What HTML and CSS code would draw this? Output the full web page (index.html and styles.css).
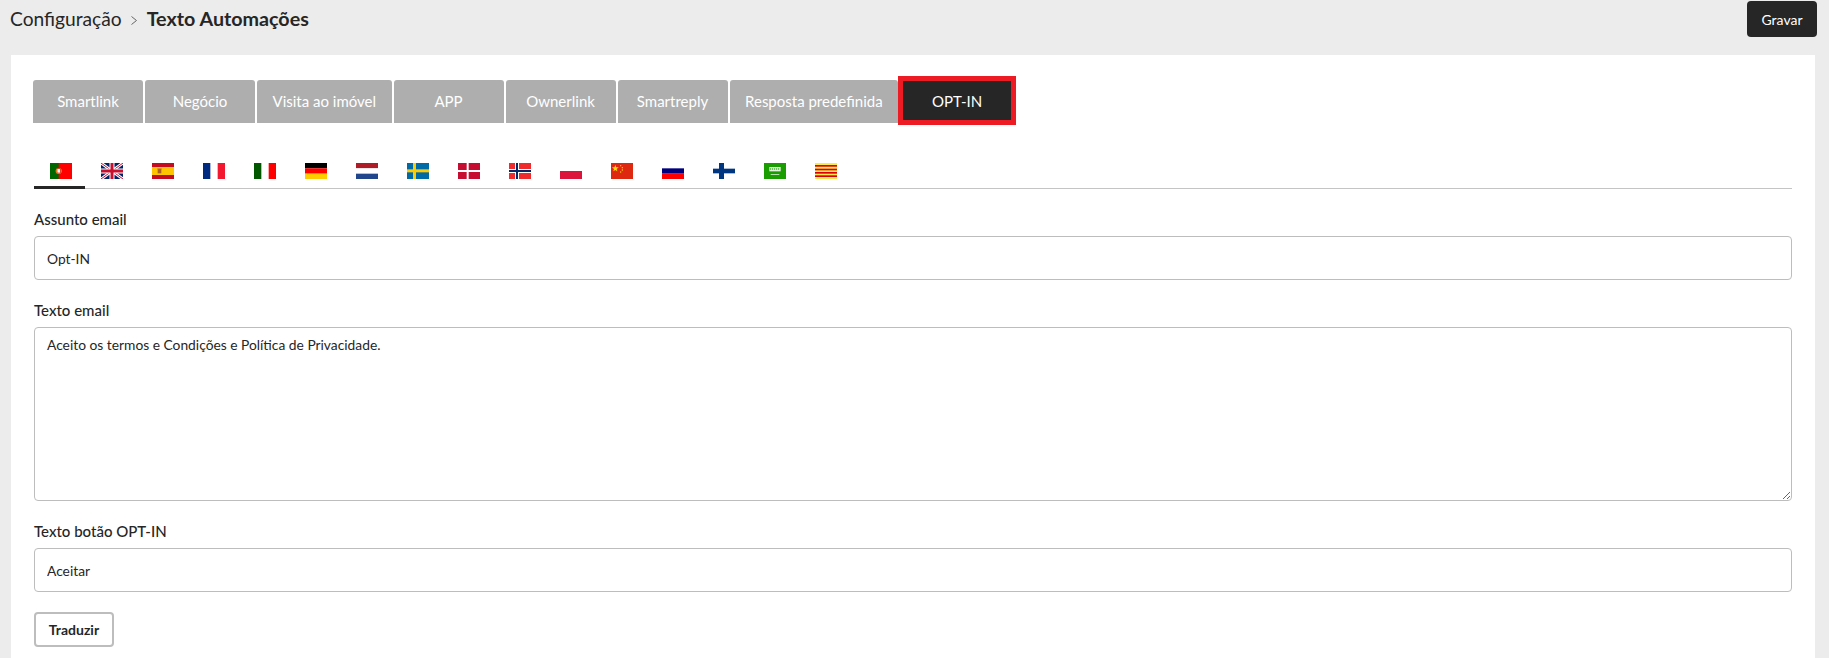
FILE: index.html
```html
<!DOCTYPE html>
<html lang="pt">
<head>
<meta charset="utf-8">
<title>Texto Automações</title>
<link rel="stylesheet" href="styles.css">
</head>
<body>
<header class="topbar">
  <div class="crumbs"><span class="crumb">Configuração</span><svg class="chev" viewBox="0 0 6 9" width="6" height="9"><path d="M.5 .5 5.500 4.500 .5 8.500" fill="none" stroke="#666" stroke-width="1"/></svg><strong class="crumb-current">Texto Automações</strong></div>
  <button class="save" type="button">Gravar</button>
</header>
<main class="card">
  <nav class="tabs">
    <a class="tab">Smartlink</a>
    <a class="tab">Negócio</a>
    <a class="tab">Visita ao imóvel</a>
    <a class="tab">APP</a>
    <a class="tab">Ownerlink</a>
    <a class="tab">Smartreply</a>
    <a class="tab">Resposta predefinida</a>
    <a class="tab tab-active">OPT-IN<span class="highlight"></span></a>
  </nav>
  <div class="langs">
    <a class="lang lang-active"><svg class="flag" viewBox="0 0 66 48"><rect width="66" height="48" fill="#f00"/><rect width="26" height="48" fill="#060"/><circle cx="26" cy="24" r="9" fill="#e8b830"/><rect x="21" y="17" width="10" height="13" fill="#fff" stroke="#d00" stroke-width="2"/></svg></a>
    <a class="lang"><svg class="flag" viewBox="0 0 66 48"><rect width="66" height="48" fill="#012169"/><path d="M0 0 66 48M66 0 0 48" stroke="#fff" stroke-width="9"/><path d="M0 0 66 48M66 0 0 48" stroke="#c8102e" stroke-width="3"/><path d="M33 0V48M0 24H66" stroke="#fff" stroke-width="15"/><path d="M33 0V48M0 24H66" stroke="#c8102e" stroke-width="9"/></svg></a>
    <a class="lang"><svg class="flag" viewBox="0 0 66 48"><rect width="66" height="48" fill="#c60b1e"/><rect y="12" width="66" height="24" fill="#ffc400"/><rect x="17" y="18" width="11" height="13" fill="#ad5f22"/><rect x="16" y="16" width="13" height="3" fill="#c8762c"/></svg></a>
    <a class="lang"><svg class="flag" viewBox="0 0 66 48"><rect width="66" height="48" fill="#fff"/><rect width="22" height="48" fill="#002a7f"/><rect x="44" width="22" height="48" fill="#f31830"/></svg></a>
    <a class="lang"><svg class="flag" viewBox="0 0 66 48"><rect width="66" height="48" fill="#fff"/><rect width="22" height="48" fill="#005700"/><rect x="44" width="22" height="48" fill="#f00"/></svg></a>
    <a class="lang"><svg class="flag" viewBox="0 0 66 48"><rect width="66" height="16" fill="#000"/><rect y="16" width="66" height="16" fill="#f00"/><rect y="32" width="66" height="16" fill="#ffcc00"/></svg></a>
    <a class="lang"><svg class="flag" viewBox="0 0 66 48"><rect width="66" height="16" fill="#ae1c28"/><rect y="16" width="66" height="16" fill="#fff"/><rect y="32" width="66" height="16" fill="#21468b"/></svg></a>
    <a class="lang"><svg class="flag" viewBox="0 0 66 48"><rect width="66" height="48" fill="#006aa7"/><rect x="18" width="9" height="48" fill="#fecc00"/><rect y="19" width="66" height="9" fill="#fecc00"/></svg></a>
    <a class="lang"><svg class="flag" viewBox="0 0 66 48"><rect width="66" height="48" fill="#c60c30"/><rect x="26" width="6" height="48" fill="#fff"/><rect y="21" width="66" height="6" fill="#fff"/></svg></a>
    <a class="lang"><svg class="flag" viewBox="0 0 66 48"><rect width="66" height="48" fill="#ef2b2d"/><rect x="18" width="12" height="48" fill="#fff"/><rect y="18" width="66" height="12" fill="#fff"/><rect x="21" width="6" height="48" fill="#002868"/><rect y="21" width="66" height="6" fill="#002868"/></svg></a>
    <a class="lang"><svg class="flag" viewBox="0 0 66 48"><rect width="66" height="24" fill="#fff"/><rect y="24" width="66" height="24" fill="#dc143c"/></svg></a>
    <a class="lang"><svg class="flag" viewBox="0 0 66 48"><rect width="66" height="48" fill="#de2910"/><path d="M13 6 15.500 13 23 13 17 18 19 25 13 21 7 25 9 18 3 13 10.500 13Z" fill="#ffde00"/><circle cx="29" cy="8" r="2" fill="#ffde00"/><circle cx="34" cy="14" r="2" fill="#ffde00"/><circle cx="34" cy="21" r="2" fill="#ffde00"/><circle cx="29" cy="27" r="2" fill="#ffde00"/></svg></a>
    <a class="lang"><svg class="flag" viewBox="0 0 66 48"><rect width="66" height="16" fill="#fff"/><rect y="16" width="66" height="16" fill="#00007f"/><rect y="32" width="66" height="16" fill="#f00"/></svg></a>
    <a class="lang"><svg class="flag" viewBox="0 0 66 48"><rect width="66" height="48" fill="#fff"/><rect x="18" width="15" height="48" fill="#003580"/><rect y="17" width="66" height="14" fill="#003580"/></svg></a>
    <a class="lang"><svg class="flag" viewBox="0 0 66 48"><rect width="66" height="48" fill="#199d00"/><rect x="16" y="12" width="34" height="13" fill="#e4f2df"/><path d="M20 15V21M26 15V21M32 15V21M38 15V21M44 15V21" stroke="#199d00" stroke-width="2"/><rect x="20" y="33" width="26" height="2" fill="#fff"/></svg></a>
    <a class="lang"><svg class="flag" viewBox="0 0 66 48"><rect width="66" height="48" fill="#ffe94a"/><rect y="6" width="66" height="5" fill="#d8000c"/><rect y="17" width="66" height="5" fill="#d8000c"/><rect y="27" width="66" height="5" fill="#d8000c"/><rect y="37" width="66" height="5" fill="#d8000c"/></svg></a>
  </div>
  <form class="form">
    <div class="field">
      <label class="label">Assunto email</label>
      <input class="control" type="text" value="Opt-IN">
    </div>
    <div class="field">
      <label class="label">Texto email</label>
      <textarea class="control area">Aceito os termos e Condições e Política de Privacidade.</textarea>
    </div>
    <div class="field">
      <label class="label">Texto botão OPT-IN</label>
      <input class="control" type="text" value="Aceitar">
    </div>
    <button class="translate" type="button">Traduzir</button>
  </form>
</main>
</body>
</html>
```
FILE: styles.css
```css
* { box-sizing: border-box; }
html, body { height: 100%; }
body {
  margin: 0;
  background: #ececec;
  font-family: Lato, "Liberation Sans", sans-serif;
  color: #262626;
  overflow: hidden;
}
.topbar {
  display: flex;
  justify-content: space-between;
  align-items: flex-start;
  height: 55px;
  padding: 1px 12px 0 10px;
}
.crumbs {
  display: flex;
  align-items: center;
  height: 35px;
  padding-bottom: 1px;
  font-size: 19.2px;
}
.chev { margin: 4px 10px 0 9px; }
.crumb-current { font-size: 19.7px; font-weight: 700; }
.save {
  width: 70px;
  height: 36px;
  border: 0;
  border-radius: 4px;
  background: #262626;
  color: #fff;
  font: 400 14px Lato, "Liberation Sans", sans-serif;
}
.card {
  margin: 0 14px 0 11px;
  padding: 25px 23px 0 22px;
  background: #fff;
  height: 603px;
}
.tabs {
  display: flex;
  gap: 2px;
  height: 43px;
}
.tab {
  position: relative;
  min-width: 110px;
  padding: 0 15.5px;
  border-radius: 3px 3px 0 0;
  background: #aeaeae;
  color: #fff;
  font-size: 15px;
  line-height: 43px;
  text-align: center;
  white-space: nowrap;
}
.tab-active {
  min-width: 108px;
  margin-left: 3px;
  background: #262626;
  border-radius: 0;
}
.highlight {
  position: absolute;
  top: -4px;
  left: -5px;
  right: -5px;
  bottom: -2px;
  border: 5px solid #ed1c24;
}
.langs {
  display: flex;
  height: 35px;
  margin: 31px 0 0 1px;
  border-bottom: 1px solid #c4c4c4;
}
.lang {
  display: flex;
  justify-content: center;
  width: 51px;
  height: 35px;
  padding: 9px 0 0 3px;
}
.lang-active { border-bottom: 3px solid #262626; }
.flag { display: block; width: 22px; height: 16px; }
.form { margin: 0 0 0 1px; }
.field { display: flex; flex-direction: column; }
.label {
  height: 27px;
  margin: 20px 0 0;
  font-size: 15px;
  font-weight: 500;
  line-height: 20px;
}
.control {
  display: block;
  width: 100%;
  height: 44px;
  padding: 0 12px;
  border: 1px solid #bdbdbd;
  border-radius: 4px;
  background: #fff;
  color: #262626;
  font: 400 13.8px Lato, "Liberation Sans", sans-serif;
}
.area {
  height: 174px;
  padding: 7px 12px;
  line-height: 20px;
  resize: vertical;
}
.translate {
  display: block;
  width: 80px;
  height: 35px;
  margin-top: 20px;
  border: 2px solid #bdbdbd;
  border-radius: 4px;
  background: #fff;
  color: #262626;
  font: 700 14px Lato, "Liberation Sans", sans-serif;
}
```
